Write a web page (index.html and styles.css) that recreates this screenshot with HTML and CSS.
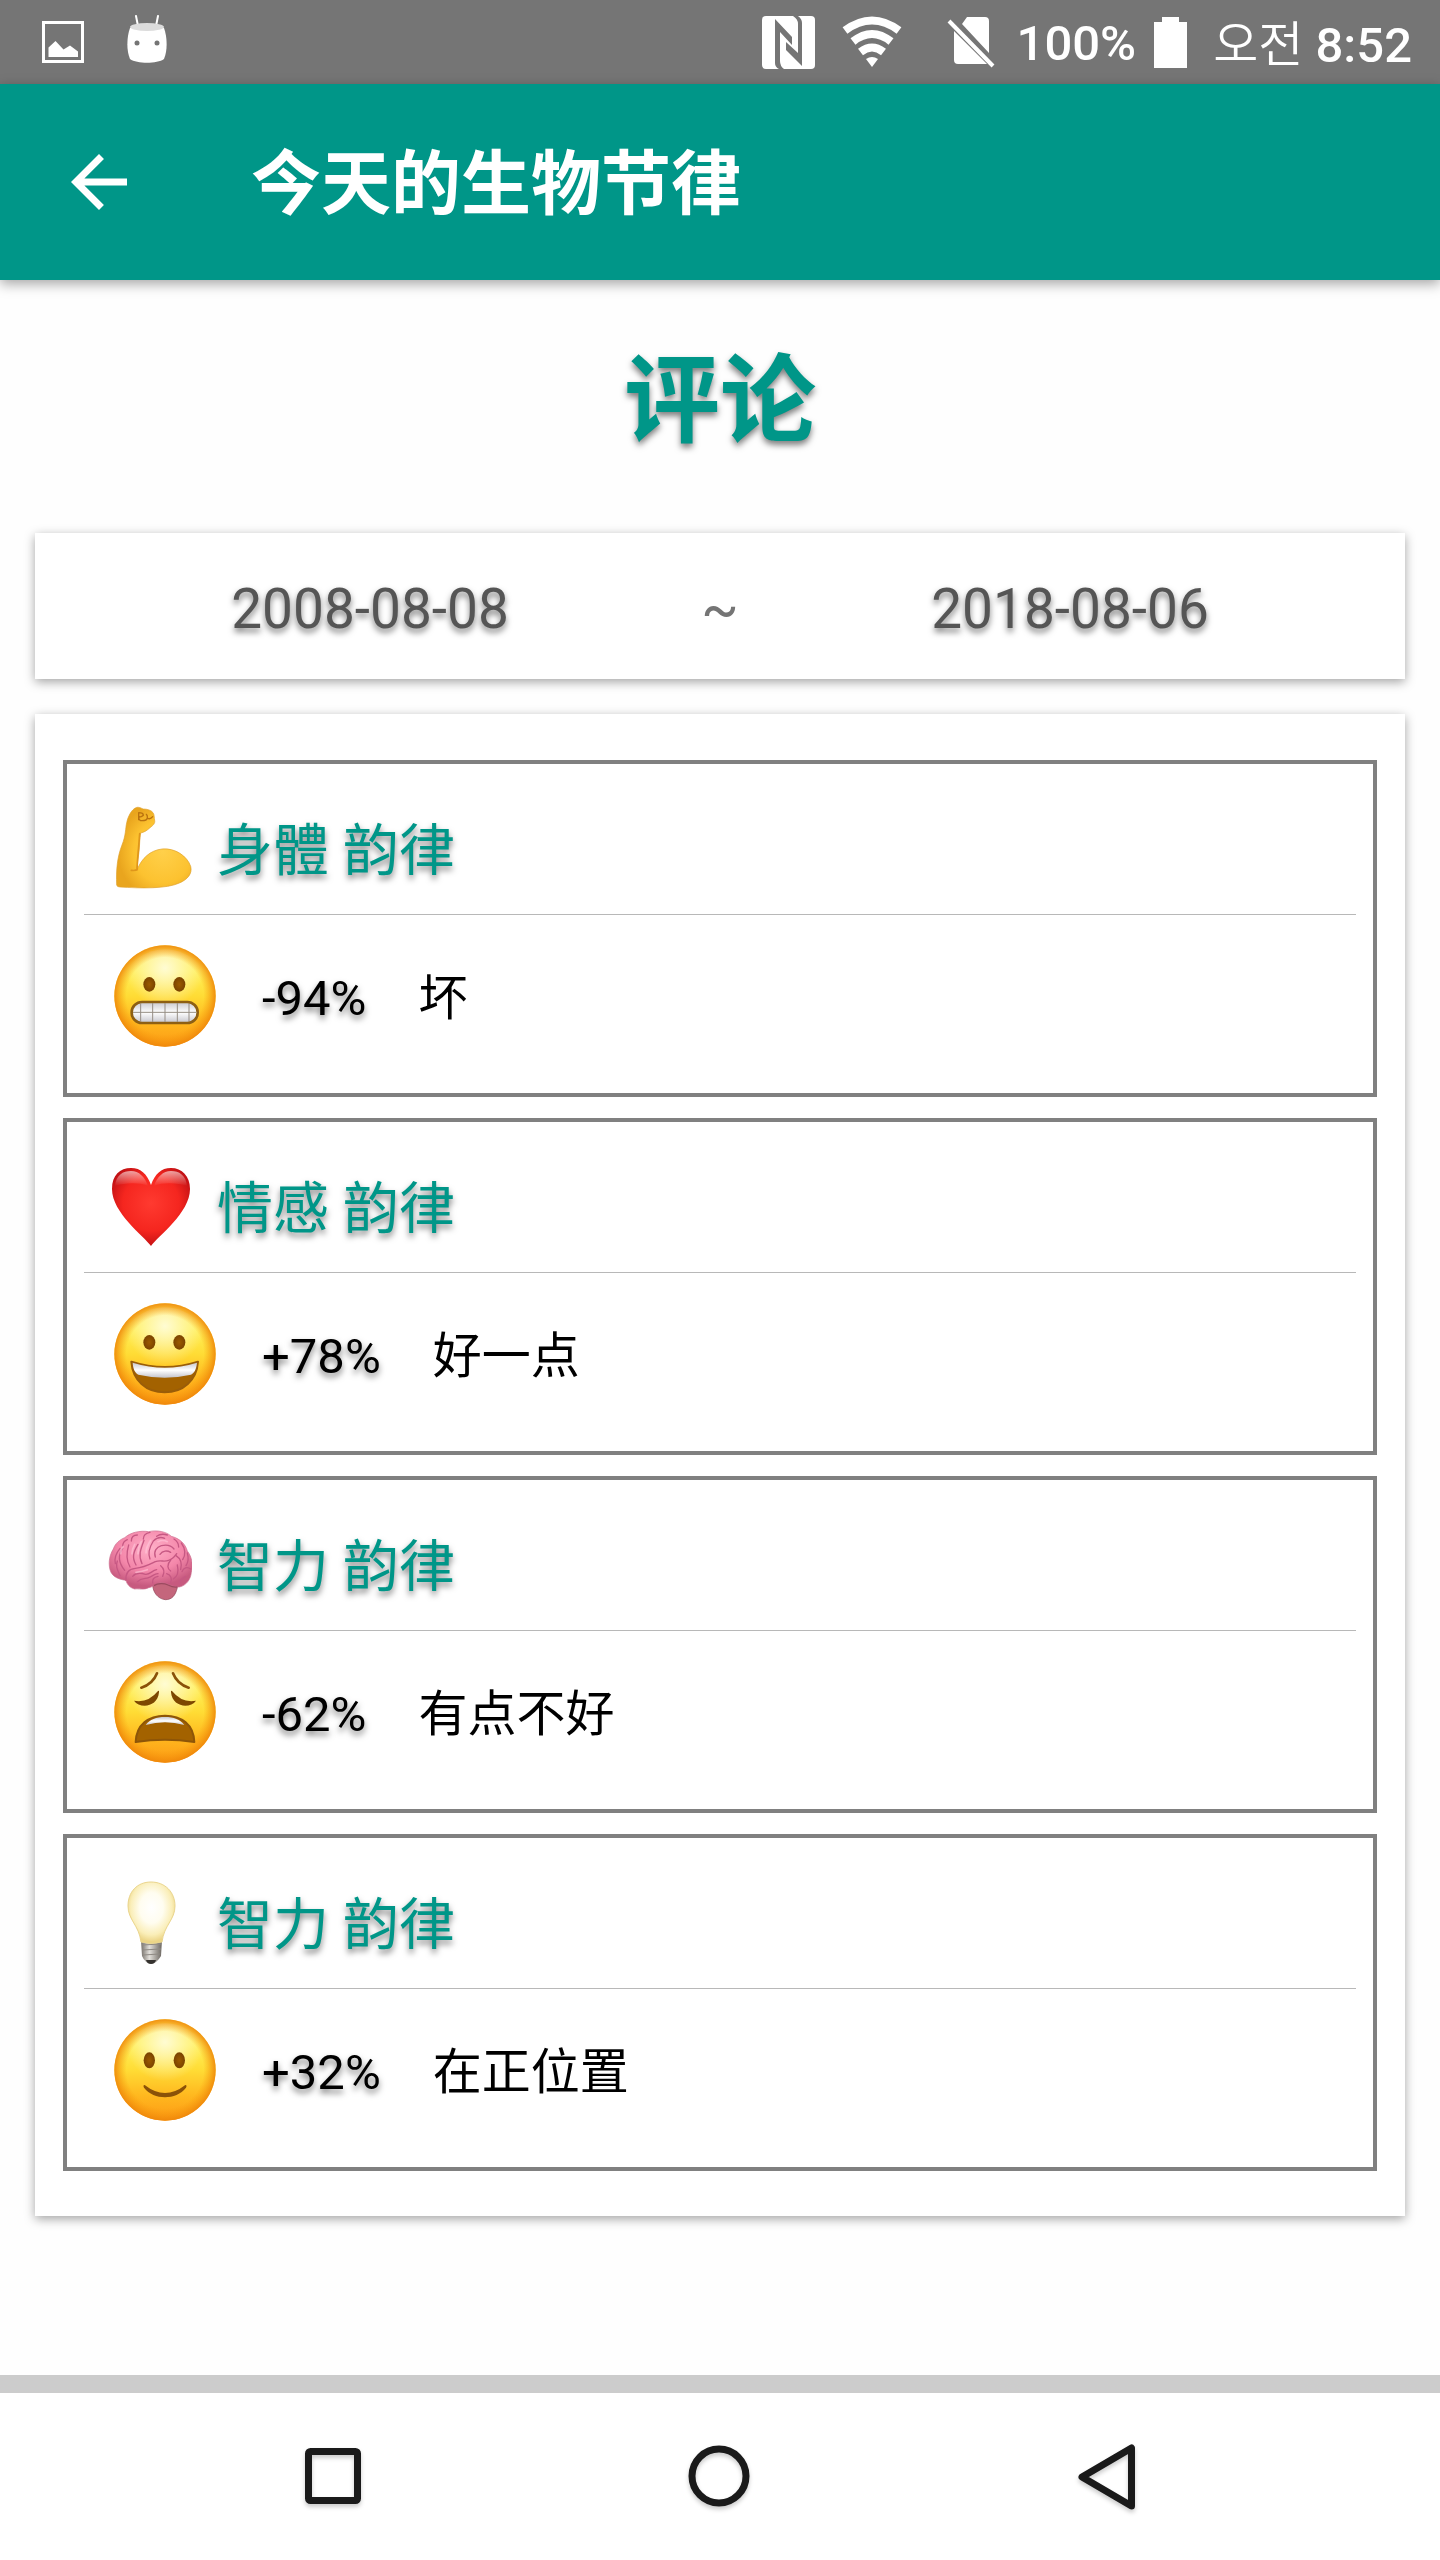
FILE: index.html
```html
<!DOCTYPE html>
<html lang="zh-CN">
<head>
<meta charset="utf-8">
<meta name="viewport" content="width=device-width, initial-scale=1">
<title>今天的生物节律</title>
<link rel="stylesheet" href="styles.css">
</head>
<body>
<svg class="defs" aria-hidden="true">
  <defs>
    <linearGradient id="faceFill" x1="0" y1="0" x2="0" y2="1">
      <stop offset="0" stop-color="#ffe95a"/><stop offset=".25" stop-color="#fff05a"/><stop offset=".5" stop-color="#ffdc35"/><stop offset=".75" stop-color="#ffb81f"/><stop offset="1" stop-color="#fd9a14"/>
    </linearGradient>
    <radialGradient id="faceEdge">
      <stop offset=".76" stop-color="#f79a0c" stop-opacity="0"/><stop offset="1" stop-color="#ee860a" stop-opacity=".9"/>
    </radialGradient>
    <radialGradient id="faceShine" cx=".5" cy=".2" r=".42">
      <stop offset="0" stop-color="#fffde0" stop-opacity=".9"/><stop offset="1" stop-color="#fffde0" stop-opacity="0"/>
    </radialGradient>
    <linearGradient id="teeth" x1="0" y1="0" x2="0" y2="1">
      <stop offset="0" stop-color="#c9c9d0"/><stop offset=".5" stop-color="#ffffff"/><stop offset="1" stop-color="#c4c4cc"/>
    </linearGradient>
    <radialGradient id="eye"><stop offset="0" stop-color="#9b5a00"/><stop offset="1" stop-color="#7a4300"/></radialGradient>
    <radialGradient id="armFill" cx=".62" cy=".55" r=".6">
      <stop offset="0" stop-color="#ffd04a"/><stop offset=".65" stop-color="#fcc230"/><stop offset="1" stop-color="#e9a51e"/>
    </radialGradient>
    <radialGradient id="heartFill" cx=".5" cy=".45" r=".6">
      <stop offset="0" stop-color="#ff3a30"/><stop offset=".6" stop-color="#f5261f"/><stop offset="1" stop-color="#b90d12"/>
    </radialGradient>
    <linearGradient id="heartShine" x1="0" y1="0" x2="0" y2="1">
      <stop offset="0" stop-color="#fff" stop-opacity=".6"/><stop offset="1" stop-color="#fff" stop-opacity="0"/>
    </linearGradient>
    <radialGradient id="brainFill" cx=".5" cy=".3" r=".65">
      <stop offset="0" stop-color="#ffb0c8"/><stop offset=".6" stop-color="#f487aa"/><stop offset="1" stop-color="#c75a7f"/>
    </radialGradient>
    <radialGradient id="bulbFill" cx=".5" cy=".42" r=".55">
      <stop offset="0" stop-color="#ffffff"/><stop offset=".45" stop-color="#fffdf0"/><stop offset=".8" stop-color="#faeeb8"/><stop offset="1" stop-color="#ecd587"/>
    </radialGradient>
    <linearGradient id="bulbBase">
      <stop offset="0" stop-color="#75706a"/><stop offset=".4" stop-color="#e2dfda"/><stop offset="1" stop-color="#6b6660"/>
    </linearGradient>
    <symbol id="face" viewBox="27 27 306 306">
      <circle cx="180" cy="180" r="152" fill="url(#faceFill)"/>
      <circle cx="180" cy="180" r="140" fill="url(#faceShine)"/>
      <circle cx="180" cy="180" r="152" fill="url(#faceEdge)"/>
    </symbol>
  </defs>
</svg>

<header class="status">
  <div class="status-group status-left">
    <svg width="42" height="42" viewBox="0 0 42 42" aria-hidden="true"><path fill="none" stroke="#fff" stroke-width="3" d="M1.500 1.500h39v39h-39z"/><path fill="#fff" d="M6.500 36V26.500l7-6.500 8 8.500 6.500-4 8 6V36z"/></svg>
    <svg class="robot" width="40" height="48" viewBox="0 0 40 48" aria-hidden="true"><path stroke="#fff" stroke-width="2" stroke-linecap="round" d="M9 1l2 10M31 1l-2 10"/><path fill="#fff" d="M3 13h34c3 8 4 22 0 31-7 5-27 5-34 0-4-9-3-23 0-31z"/><ellipse cx="20" cy="12" rx="17" ry="4" fill="#dcdcdc"/><circle cx="10" cy="28" r="2.500" fill="#757575"/><circle cx="30" cy="28" r="2.500" fill="#757575"/></svg>
  </div>
  <div class="status-group status-right">
    <svg width="53" height="53" viewBox="0 0 53 53" aria-hidden="true"><rect width="53" height="53" rx="4" fill="#fff"/><path fill="#757575" d="M13 3v44q0 4 4 6h5q-4-3-4-8V16l12 13v-8z"/><path fill="#757575" d="M40 50V7q0-4-4-7h-5q5 3 5 8v29L24 26v8z"/></svg>
    <svg class="wifi" width="60" height="52" viewBox="0 0 60 52" aria-hidden="true"><path fill="#fff" d="M30 51l-6-8q6-4 12 0z"/><path fill="none" stroke="#fff" stroke-width="8" d="M18.500 36q11.500-9 23 0M11 25.500q19-15 38 0M3 14.500q27-20 54 0"/></svg>
    <svg class="sim" width="48" height="51" viewBox="0 0 48 51" aria-hidden="true"><path fill="#fff" d="M20 0h18q4 0 4 4v32L15 7zM7 14l33 33H11q-4 0-4-4z"/><path stroke="#fff" stroke-width="4" d="M2 4l44 45"/></svg>
    <span class="status-text battery-level">100%</span>
    <svg class="battery" width="33" height="51" viewBox="0 0 33 51" aria-hidden="true"><path fill="#fff" d="M8 0h17v5h8v46H0V5h8z"/></svg>
    <time class="status-text" datetime="08:52"><span class="meridiem">오전</span> 8:52</time>
  </div>
</header>

<div class="appbar">
  <button class="back" type="button" aria-label="返回">
    <svg width="84" height="84" viewBox="0 0 24 24" aria-hidden="true"><path fill="#fff" d="M20 11H7.830l5.590-5.590L12 4l-8 8 8 8 1.410-1.410L7.830 13H20z"/></svg>
  </button>
  <h1 class="appbar-title">今天的生物节律</h1>
</div>

<main class="content">
  <h2 class="heading">评论</h2>

  <section class="card dates">
    <time class="date" datetime="2008-08-08">2008-08-08</time>
    <span class="tilde">~</span>
    <time class="date" datetime="2018-08-06">2018-08-06</time>
  </section>

  <section class="card rhythms">
    <article class="rhythm">
      <div class="rhythm-head">
        <svg class="icon" viewBox="24 33 252 252" aria-hidden="true">
          <path fill="url(#armFill)" stroke="#e0a02a" stroke-width="2" d="M50 270C48 225 52 185 66 150C78 120 76 100 80 84C84 62 96 44 106 39C114 34 122 39 130 42C142 42 154 46 159 53C164 60 162 68 164 76C166 86 158 92 150 98C142 106 132 112 122 114C118 132 120 150 116 178C113 200 110 218 112 222C126 190 150 166 186 162C226 158 262 184 272 214C278 236 262 254 238 264C200 282 120 280 60 276Q51 276 50 270z"/>
          <path fill="none" stroke="#df961b" stroke-width="5" stroke-linecap="round" d="M111 225C112 190 117 150 119 116M94 226q14 2 18-4"/>
          <path fill="none" stroke="#b9710f" stroke-width="4" stroke-linecap="round" d="M116 53q14 0 14 8-6 6-12 4-4 8 4 12 18 1 20-8 8 6 16-4M139 58q4 4 3 10M116 54v20"/>
        </svg>
        <h3 class="rhythm-name">身體 韵律</h3>
      </div>
      <div class="rhythm-body">
        <svg class="face" viewBox="27 27 306 306" aria-hidden="true"><use href="#face" x="27" y="27" width="306" height="306"/>
          <ellipse cx="133" cy="145" rx="18" ry="22" fill="url(#eye)"/><ellipse cx="223" cy="145" rx="18" ry="22" fill="url(#eye)"/>
          <rect x="80" y="198" width="198" height="63" rx="31" fill="url(#teeth)" stroke="#8d5f14" stroke-width="8"/>
          <path fill="none" stroke="#958d84" stroke-width="3" d="M84 229h190M107 203v53M143 201v57M180 201v57M217 201v57M252 203v53"/>
        </svg>
        <strong class="percent">-94%</strong><span class="phrase">坏</span>
      </div>
    </article>

    <article class="rhythm">
      <div class="rhythm-head">
        <svg class="icon" viewBox="0 0 84 84" aria-hidden="true">
          <path fill="url(#heartFill)" d="M43 82C36 72 4 49 4 25 4 11 12 4 23 4c10 0 16 6 20 17C47 10 53 4 63 4c11 0 19 8 19 21 0 24-32 47-39 57z"/>
          <path fill="url(#heartShine)" d="M7 22C8 11 15 7 23 7c8 0 14 6 17 15-9-4-24-3-33 0zM79 22C78 11 71 7 63 7c-8 0-14 6-17 15 9-4 24-3 33 0z"/>
        </svg>
        <h3 class="rhythm-name">情感 韵律</h3>
      </div>
      <div class="rhythm-body">
        <svg class="face" viewBox="27 27 306 306" aria-hidden="true"><use href="#face" x="27" y="27" width="306" height="306"/>
          <ellipse cx="133" cy="145" rx="18" ry="22" fill="url(#eye)"/><ellipse cx="223" cy="145" rx="18" ry="22" fill="url(#eye)"/>
          <path fill="#a36200" stroke="#9a5d08" stroke-width="6" stroke-linejoin="round" d="M79 203q101 32 200 0c-4 56-44 92-100 92s-96-36-100-92z"/>
          <path fill="url(#teeth)" d="M83 206q97 30 193 0c-2 20-8 31-18 36q-79 18-158 0c-10-5-16-18-17-36z"/>
        </svg>
        <strong class="percent">+78%</strong><span class="phrase">好一点</span>
      </div>
    </article>

    <article class="rhythm">
      <div class="rhythm-head">
        <svg class="icon" viewBox="24 21 252 252" aria-hidden="true">
          <path fill="#c4667c" stroke="#8e4053" stroke-width="2" d="M158 208c0 24 16 44 38 46 20 0 30-12 36-36l-16-22z"/>
          <path fill="url(#brainFill)" stroke="#cc6f90" stroke-width="2" d="M30 164C24 140 30 118 40 102C46 84 60 74 74 68C92 52 120 46 146 50C170 44 200 50 214 64C238 70 256 86 262 108C276 126 280 150 274 172C272 194 258 212 238 216C220 218 206 206 190 204C172 200 162 216 146 218C130 226 116 220 104 222C88 218 80 206 78 196C62 194 36 188 30 164z"/>
          <g fill="none" stroke="#c65883" stroke-width="4" stroke-linecap="round">
            <path d="M78 196c-2-22 8-34 28-36 26-2 40-10 60-20 16-6 26 2 40-4 14-4 20-14 24-20"/>
            <path d="M60 182c-8-18-14-28-8-44M74 166c-16-20-22-44-6-66M46 146c-4-18 4-34 14-46M90 156c-12-20-10-46-4-66M108 150c-14-24-6-42 6-62M126 146c-12-24-4-44 6-70M82 74c-10 4-14 12-14 20M112 60c-12 0-18 8-18 18M150 52c-10 2-20 8-20 20M150 132c-8-20 0-38 10-54 10-10 24-12 34-8M166 126c-6-18 4-30 18-34 16-4 30 0 38 10M180 118c8-12 22-12 32-6M202 60c-12-4-24-2-32 4M222 72c10 6 14 14 14 24M244 84c12 16 14 36 4 50M228 122c16 10 18 26 14 42M262 114c4 14 4 26-4 38M272 162c-10-8-22-4-26 8M212 136c-12 12-10 26 0 32M232 150c4 18 2 34-12 42M256 184c-8 6-16 8-18 22M98 184c10-12 26-10 38-6 14 2 20-12 34-14M112 200c12-12 24-8 34-12 12-4 16-12 28-12M182 152c10 8 12 20 6 32M200 176c14 4 16 16 12 26M158 204c-2-12 6-18 16-20"/>
          </g>
          <g fill="none" stroke="#ffc8da" stroke-width="5" stroke-linecap="round" opacity=".6"><path d="M62 116c0-10 4-18 8-22M96 116c0-12 4-20 8-28M114 116c0-14 4-26 10-36M138 114c0-16 6-26 14-38M174 80c12-6 20-4 28 0M108 172c12-2 22-4 34-8"/></g>
          <path fill="none" stroke="#9c4a60" stroke-width="4" d="M162 212c12-8 30-8 42-2s20 8 28 6"/>
        </svg>
        <h3 class="rhythm-name">智力 韵律</h3>
      </div>
      <div class="rhythm-body">
        <svg class="face" viewBox="27 27 306 306" aria-hidden="true"><use href="#face" x="27" y="27" width="306" height="306"/>
          <path fill="none" stroke="#8b5208" stroke-width="8" stroke-linecap="round" d="M109 107q34-10 47-43M251 107q-34-10-47-43"/>
          <path fill="#7d4700" d="M87 146q42 8 72-29 4-3 3 4c-4 46-58 50-75 25zM273 146q-42 8-72-29-4-3-3 4c4 46 58 50 75 25z"/>
          <path fill="#a36200" stroke="#8d5508" stroke-width="6" stroke-linejoin="round" d="M92 270c2-52 38-79 88-79s86 27 88 79q-88-14-176 0z"/>
          <path fill="url(#teeth)" d="M122 219c12-16 32-24 58-24s46 8 58 24q-58-16-116 0z"/>
        </svg>
        <strong class="percent">-62%</strong><span class="phrase">有点不好</span>
      </div>
    </article>

    <article class="rhythm">
      <div class="rhythm-head">
        <svg class="icon" viewBox="0 0 84 84" aria-hidden="true">
          <path fill="url(#bulbBase)" d="M33 60h21l-1 16q-4 7-10 8-6-1-9-8z"/>
          <path fill="none" stroke="#8f8a84" stroke-width="1" d="M34 65l19-1M34 70l19-1M35 75l17-1"/>
          <path fill="#35322f" d="M38 80h10q-1 4-5 4t-5-4z"/>
          <path fill="url(#bulbFill)" stroke="#ead58d" stroke-width="1" d="M43 2C29 2 20 12 20 26c0 14 11 19 13 36q10 3 21 0c2-17 13-22 13-36C67 12 57 2 43 2z"/>
        </svg>
        <h3 class="rhythm-name">智力 韵律</h3>
      </div>
      <div class="rhythm-body">
        <svg class="face" viewBox="27 27 306 306" aria-hidden="true"><use href="#face" x="27" y="27" width="306" height="306"/>
          <ellipse cx="133" cy="151" rx="17" ry="24" fill="url(#eye)"/><ellipse cx="223" cy="151" rx="17" ry="24" fill="url(#eye)"/>
          <path fill="#8b5208" d="M119 225q61 48 122 0 6 0 2 8c-30 38-96 38-126 0q-4-8 2-8z"/>
        </svg>
        <strong class="percent">+32%</strong><span class="phrase">在正位置</span>
      </div>
    </article>
  </section>
</main>

<nav class="navbar" aria-label="系统导航">
  <button class="nav-button" type="button" aria-label="最近任务"><svg width="64" height="66" viewBox="0 0 64 66" aria-hidden="true"><rect x="7.500" y="7.500" width="49" height="49" rx="2" fill="none" stroke="#1a1a1a" stroke-width="7"/></svg></button>
  <button class="nav-button" type="button" aria-label="主屏幕"><svg width="64" height="66" viewBox="0 0 64 66" aria-hidden="true"><circle cx="31" cy="32" r="27" fill="none" stroke="#1a1a1a" stroke-width="7"/></svg></button>
  <button class="nav-button" type="button" aria-label="返回"><svg width="64" height="66" viewBox="0 0 64 66" aria-hidden="true"><path fill="none" stroke="#1a1a1a" stroke-width="7" stroke-linejoin="round" d="M56.500 4v58L7 33z"/></svg></button>
</nav>
</body>
</html>
```

FILE: styles.css
```css
* {
  box-sizing: border-box;
}

body {
  margin: 0;
  min-height: 100vh;
  display: flex;
  flex-direction: column;
  background: #fefefe;
  color: #000;
  font-family: Roboto, "Noto Sans CJK SC", sans-serif;
}

h1, h2, h3 {
  margin: 0;
}

button {
  padding: 0;
  border: 0;
  background: none;
}

svg {
  display: block;
  flex: none;
}

.defs {
  position: absolute;
  width: 0;
  height: 0;
}

/* Status bar */
.status {
  display: flex;
  justify-content: space-between;
  height: 84px;
  padding: 0 28px 0 42px;
  background: #757575;
  color: #fff;
}

.status-group {
  display: flex;
  align-items: center;
}

.status-left {
  gap: 43px;
}

.robot {
  margin-bottom: 6px;
}

.status-text {
  padding-top: 3px;
  font-size: 49px;
  line-height: 60px;
  font-weight: 500;
  white-space: nowrap;
}

.meridiem {
  font-family: "Noto Sans CJK KR", sans-serif;
  font-weight: 350;
}

.wifi {
  margin-left: 27px;
}

.sim {
  margin-left: 45px;
}

.battery-level {
  margin-left: 22px;
}

.battery {
  margin: 0 26px 0 18px;
}

/* App bar */
.appbar {
  display: flex;
  align-items: center;
  gap: 110px;
  height: 196px;
  padding: 0 57px;
  background: #009688;
  color: #fff;
  box-shadow: 0 4px 12px rgba(0, 0, 0, 0.35);
}

.appbar-title {
  padding-bottom: 6px;
  font-family: "Noto Sans CJK SC", sans-serif;
  font-size: 70px;
  line-height: 100px;
  font-weight: 700;
}

/* Content */
.content {
  flex: 1;
  padding: 0 35px 84px;
}

.heading {
  padding: 49px 0 76px;
  color: #009688;
  font-family: "Noto Sans CJK SC", sans-serif;
  font-size: 96px;
  line-height: 128px;
  font-weight: 700;
  text-align: center;
  text-shadow: 0 4px 6px rgba(0, 0, 0, 0.5);
}

.card {
  background: #fff;
  box-shadow: 0 3px 10px rgba(0, 0, 0, 0.36);
}

.dates {
  display: grid;
  grid-template-columns: 1fr 30px 1fr;
  align-items: center;
  height: 146px;
  margin-bottom: 35px;
  padding-top: 6px;
  color: #757575;
  font-size: 55px;
  line-height: 66px;
  text-align: center;
}

.date {
  color: #555;
  text-shadow: 0 4px 6px rgba(0, 0, 0, 0.5);
}

.tilde {
  justify-self: center;
}

.rhythms {
  display: flex;
  flex-direction: column;
  gap: 21px;
  padding: 46px 28px 45px;
}

.rhythm {
  padding: 0 17px;
  border: 4px solid #808080;
}

.rhythm-head {
  display: flex;
  align-items: center;
  gap: 25px;
  padding: 39px 24px 21px;
  border-bottom: 1px solid #b8b8b8;
}

.icon {
  width: 84px;
  height: 84px;
}

.rhythm-name {
  padding-top: 6px;
  color: #009688;
  font-family: Roboto, "Noto Sans CJK SC", sans-serif;
  font-size: 56px;
  line-height: 84px;
  font-weight: 400;
  text-shadow: 0 4px 6px rgba(0, 0, 0, 0.5);
}

.rhythm-body {
  display: flex;
  align-items: center;
  padding: 30px 30px 46px;
  font-size: 49px;
  line-height: 72px;
}

.face {
  width: 102px;
  height: 102px;
}

.percent,
.phrase {
  padding-top: 6px;
}

.percent {
  margin: 0 52px 0 46px;
  font-weight: 400;
  text-shadow: 0 4px 6px rgba(0, 0, 0, 0.5);
}

/* System navigation */
.navbar {
  display: flex;
  justify-content: center;
  border-top: 18px solid #ccc;
  background: #fff;
}

.nav-button {
  display: flex;
  align-items: center;
  justify-content: center;
  width: 387px;
  height: 167px;
}

.nav-button svg {
  filter: drop-shadow(0 3px 2px rgba(0, 0, 0, 0.2));
}
```
